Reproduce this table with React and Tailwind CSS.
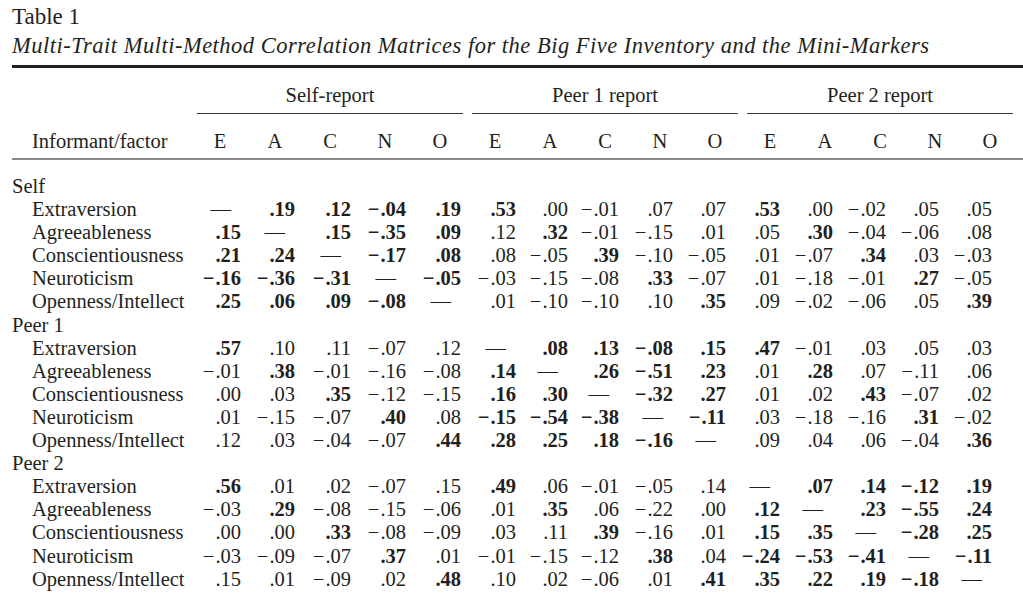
import React from "react";

const groups = ["Self-report", "Peer 1 report", "Peer 2 report"];
const factors = ["E", "A", "C", "N", "O"];

// "*" marks a bold value, "—" is the diagonal
const sections = [
  {
    name: "Self",
    rows: [
      ["Extraversion", "— *.19 *.12 *−.04 *.19 *.53 .00 −.01 .07 .07 *.53 .00 −.02 .05 .05"],
      ["Agreeableness", "*.15 — *.15 *−.35 *.09 .12 *.32 −.01 −.15 .01 .05 *.30 −.04 −.06 .08"],
      ["Conscientiousness", "*.21 *.24 — *−.17 *.08 .08 −.05 *.39 −.10 −.05 .01 −.07 *.34 .03 −.03"],
      ["Neuroticism", "*−.16 *−.36 *−.31 — *−.05 −.03 −.15 −.08 *.33 −.07 .01 −.18 −.01 *.27 −.05"],
      ["Openness/Intellect", "*.25 *.06 *.09 *−.08 — .01 −.10 −.10 .10 *.35 .09 −.02 −.06 .05 *.39"],
    ],
  },
  {
    name: "Peer 1",
    rows: [
      ["Extraversion", "*.57 .10 .11 −.07 .12 — *.08 *.13 *−.08 *.15 *.47 −.01 .03 .05 .03"],
      ["Agreeableness", "−.01 *.38 −.01 −.16 −.08 *.14 — *.26 *−.51 *.23 .01 *.28 .07 −.11 .06"],
      ["Conscientiousness", ".00 .03 *.35 −.12 −.15 *.16 *.30 — *−.32 *.27 .01 .02 *.43 −.07 .02"],
      ["Neuroticism", ".01 −.15 −.07 *.40 .08 *−.15 *−.54 *−.38 — *−.11 .03 −.18 −.16 *.31 −.02"],
      ["Openness/Intellect", ".12 .03 −.04 −.07 *.44 *.28 *.25 *.18 *−.16 — .09 .04 .06 −.04 *.36"],
    ],
  },
  {
    name: "Peer 2",
    rows: [
      ["Extraversion", "*.56 .01 .02 −.07 .15 *.49 .06 −.01 −.05 .14 — *.07 *.14 *−.12 *.19"],
      ["Agreeableness", "−.03 *.29 −.08 −.15 −.06 .01 *.35 .06 −.22 .00 *.12 — *.23 *−.55 *.24"],
      ["Conscientiousness", ".00 .00 *.33 −.08 −.09 .03 .11 *.39 −.16 .01 *.15 *.35 — *−.28 *.25"],
      ["Neuroticism", "−.03 −.09 −.07 *.37 .01 −.01 −.15 −.12 *.38 .04 *−.24 *−.53 *−.41 — *−.11"],
      ["Openness/Intellect", ".15 .01 −.09 .02 *.48 .10 .02 −.06 .01 *.41 *.35 *.22 *.19 *−.18 —"],
    ],
  },
];

const Cell = ({ v }) => {
  if (v === "—") return <div className="text-right pr-[10px]">—</div>;
  const bold = v.startsWith("*");
  const num = bold ? v.slice(1) : v;
  const neg = num.startsWith("−");
  return (
    <div className={bold ? "text-right font-bold" : "text-right"}>
      {neg && <span className="mr-[1px]">−</span>}
      {neg ? num.slice(1) : num}
    </div>
  );
};

const App = () => {
  return (
    <div className="w-[1023px] h-[594px] overflow-hidden bg-white text-[#231f20] pt-[4px] font-['Liberation_Serif','Times_New_Roman',serif]">
      <div className="pl-[12px] text-[23px] leading-[26px]">Table 1</div>
      <div className="pl-[12px] mt-[3px] text-[22.5px] leading-[26px] italic tracking-[0.5px]">
        Multi-Trait Multi-Method Correlation Matrices for the Big Five Inventory and the Mini-Markers
      </div>
      <div className="ml-[12px] mt-[6px] border-t-[3px] border-[#231f20]" />

      <div className="text-[20.5px] leading-[23px]">
        {/* group headings */}
        <div className="mt-[14px] grid grid-cols-[192.5px_repeat(3,275px)]">
          <div />
          {groups.map((g) => (
            <div key={g} className="mx-[4.5px]">
              <div className="pt-[2px] text-center">{g}</div>
              <div className="mt-[6px] border-t border-[#3a3a3a]" />
            </div>
          ))}
        </div>

        {/* factor letters */}
        <div className="mt-[16px] grid grid-cols-[192.5px_repeat(15,55px)]">
          <div className="pl-[32px]">Informant/factor</div>
          {groups.flatMap((g) =>
            factors.map((f) => (
              <div key={g + f} className="text-center">
                {f}
              </div>
            ))
          )}
        </div>
        <div className="ml-[12px] mt-[4.5px] border-t-2 border-[#8a8a8a]" />

        {/* body */}
        <div className="mt-[15.5px] leading-[23.1px]">
          {sections.map((s) => (
            <div key={s.name}>
              <div className="pl-[12px]">{s.name}</div>
              {s.rows.map(([label, vals]) => (
                <div
                  key={s.name + label}
                  className="grid grid-cols-[190px_51px_54px_56px_55px_55px_55px_52px_51px_54px_53px_54px_53px_53px_53px_53px]"
                >
                  <div className="pl-[32px] whitespace-nowrap">{label}</div>
                  {vals.split(" ").map((v, i) => (
                    <Cell key={i} v={v} />
                  ))}
                </div>
              ))}
            </div>
          ))}
        </div>
      </div>
    </div>
  );
};

export default App;
